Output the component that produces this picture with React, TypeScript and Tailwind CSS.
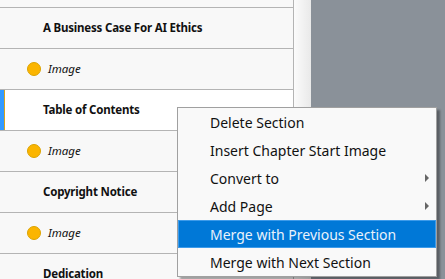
const rows = [
  { kind: "section", label: "A Business Case For AI Ethics" },
  { kind: "image", label: "Image" },
  { kind: "section", label: "Table of Contents", selected: true },
  { kind: "image", label: "Image" },
  { kind: "section", label: "Copyright Notice" },
  { kind: "image", label: "Image" },
  { kind: "section", label: "Dedication" },
];

const menuItems = [
  { label: "Delete Section" },
  { label: "Insert Chapter Start Image" },
  { label: "Convert to", submenu: true },
  { label: "Add Page", submenu: true },
  { label: "Merge with Previous Section", active: true },
  { label: "Merge with Next Section" },
];

function Row({ row }: { row: (typeof rows)[number] }) {
  if (row.kind === "image") {
    return (
      <div className="flex h-[41px] items-center border-b border-[#b4b4b4] pl-[27px]">
        <span className="h-[14px] w-[14px] rounded-full border border-[#dca300] bg-[#fbb500]" />
        <span className="ml-[7px] text-[11.5px] italic text-[#111]">{row.label}</span>
      </div>
    );
  }
  return (
    <div
      className={`relative flex h-[41px] items-center border-b border-[#b4b4b4] pl-[43px] ${
        row.selected ? "bg-white" : ""
      }`}
    >
      {row.selected ? (
        <span className="absolute left-0 top-0 h-[40px] w-[5px] border-r border-[#d9a21b] bg-[#3399ff]" />
      ) : null}
      <span className="text-[11.5px] font-bold tracking-[-0.2px] text-[#111]">{row.label}</span>
    </div>
  );
}

export default function App() {
  return (
    <div
      className="relative flex h-[279px] w-[445px] overflow-hidden bg-[#f8f8f8]"
      style={{ fontFamily: '"Noto Sans", "Open Sans", sans-serif' }}
    >
      <div className="w-[294px] shrink-0 border-r border-[#b4b4b4] bg-[#f8f8f8]">
        <div className="h-[8px] border-b border-[#b4b4b4]" />
        {rows.map((row, i) => (
          <Row key={i} row={row} />
        ))}
      </div>
      <div className="w-[17px] shrink-0 bg-gradient-to-r from-[#fbfbfb] to-[#e9e9e9]" />
      <div className="flex-1 bg-[#8a9199]" />

      <div className="absolute left-[177px] top-[107px] w-[260px] border border-[#a0a0a0] bg-[#f9f9f9] shadow-[3px_3px_2px_rgba(0,0,0,0.35)]">
        {menuItems.map((item) => (
          <div
            key={item.label}
            className={`relative flex h-[28px] items-center text-[14px] ${
              item.active
                ? "border border-[#3d9bea] bg-[#0078d7] pl-[31px] text-[#eaf2fb]"
                : "pl-[32px] text-[#111]"
            }`}
          >
            {item.label}
            {item.submenu ? (
              <span className="absolute right-[7px] top-1/2 h-0 w-0 -translate-y-1/2 border-y-[4px] border-l-[4px] border-y-transparent border-l-[#666]" />
            ) : null}
          </div>
        ))}
      </div>
    </div>
  );
}
